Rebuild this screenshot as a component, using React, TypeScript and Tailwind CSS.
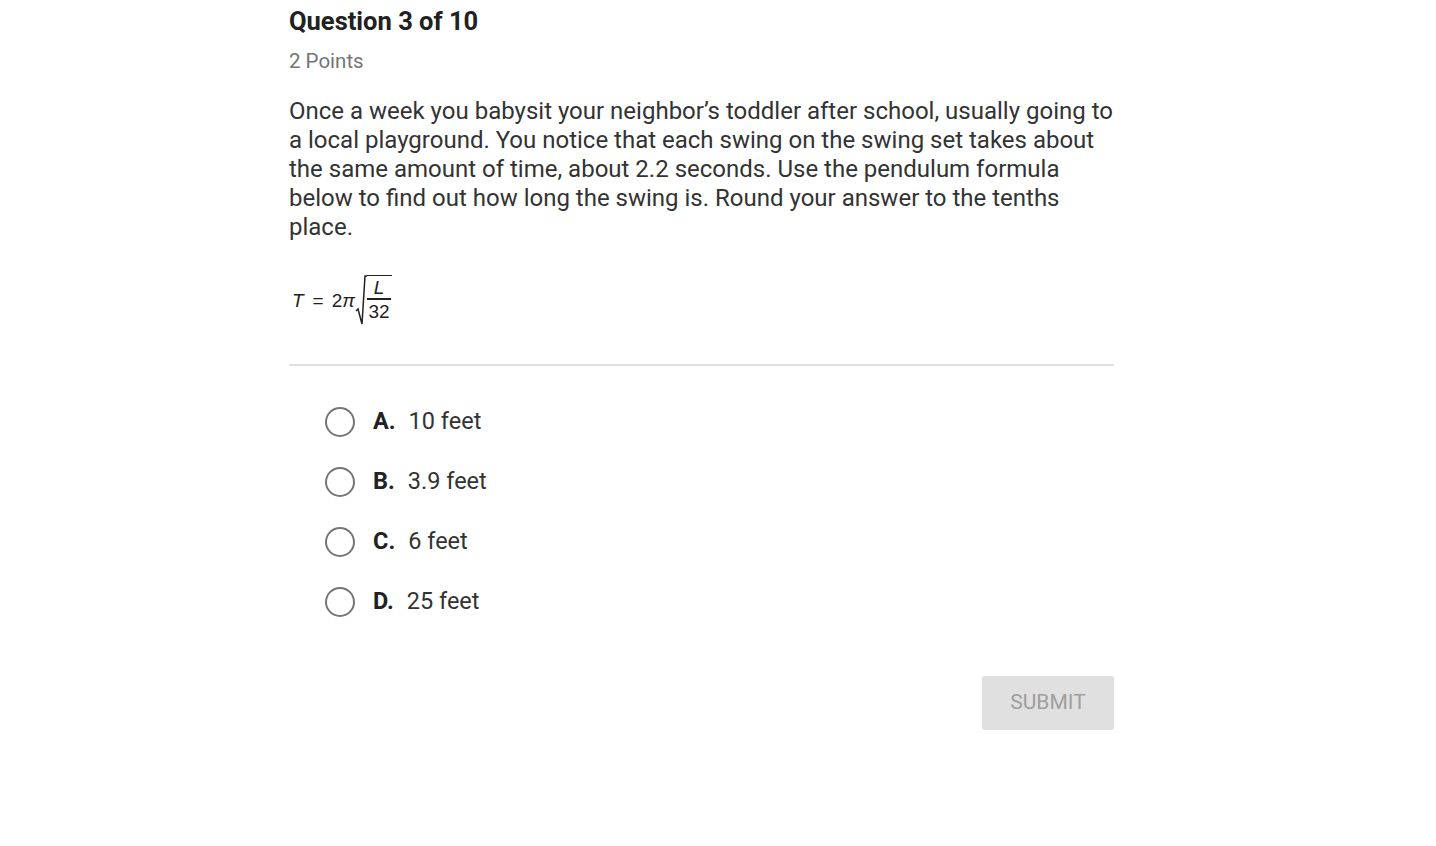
import React, { useState } from "react";

const options = [
  { letter: "A.", text: "10 feet" },
  { letter: "B.", text: "3.9 feet" },
  { letter: "C.", text: "6 feet" },
  { letter: "D.", text: "25 feet" },
];

const Formula = () => (
  <div className="flex items-end text-[19px] text-[#222] font-['Liberation_Sans',sans-serif] leading-none">
    <span className="mb-[15px] italic">T</span>
    <span className="mb-[15px] ml-[9px]">=</span>
    <span className="mb-[15px] ml-[8px]">2</span>
    <span className="mb-[15px] italic">π</span>
    <div className="flex">
      <svg width="12" height="50" viewBox="0 0 12 50" className="block">
        <path d="M1 36 L3 34 L7 49 L10 1 L12 1" fill="none" stroke="#222" strokeWidth="1.5" />
      </svg>
      <div className="flex flex-col items-center border-t-[1.5px] border-[#222] pt-[2px] pr-[1px]">
        <span className="italic leading-[20px]">L</span>
        <span className="h-[1.5px] w-[24px] bg-[#222]" />
        <span className="leading-[24px]">32</span>
      </div>
    </div>
  </div>
);

export default function App() {
  const [selected, setSelected] = useState<number | null>(null);

  return (
    <div className="min-h-screen bg-white font-['Roboto',sans-serif]">
      <div className="ml-[289px] w-[825px] pt-[3px]">
        <h1 className="text-[25.5px] font-bold leading-[36px] text-[#212121]">Question 3 of 10</h1>
        <p className="mt-[7px] text-[20.5px] leading-[30px] text-[#757575]">2 Points</p>

        <p className="mt-[21px] text-[24px] leading-[29px] text-[#333]">
          Once a week you babysit your neighbor’s toddler after school, usually going to a local playground. You notice that each swing on the swing set takes about the same amount of time, about 2.2 seconds. Use the pendulum formula below to find out how long the swing is. Round your answer to the tenths place.
        </p>

        <div className="mt-[33px] pl-[3px]">
          <Formula />
        </div>

        <div className="mt-[39px] h-[2px] bg-[#e0e0e0]" />

        <div className="mt-[41px] flex flex-col gap-[30px] pl-[36px]">
          {options.map((o, i) => (
            <button
              key={o.letter}
              onClick={() => setSelected(i)}
              className="flex items-center h-[30px] text-left"
            >
              <span className="flex h-[30px] w-[30px] items-center justify-center rounded-full border-[2.5px] border-[#757575]">
                {selected === i && <span className="h-[14px] w-[14px] rounded-full bg-[#757575]" />}
              </span>
              <span className="ml-[18px] text-[23.5px] font-bold text-[#222]">{o.letter}</span>
              <span className="ml-[13px] text-[23.5px] text-[#333]">{o.text}</span>
            </button>
          ))}
        </div>

        <div className="mt-[59px] flex justify-end">
          <button className="h-[54px] w-[132px] rounded-[3px] bg-[#e0e0e0] text-[21px] text-[#9e9e9e]">
            SUBMIT
          </button>
        </div>
      </div>
    </div>
  );
}
